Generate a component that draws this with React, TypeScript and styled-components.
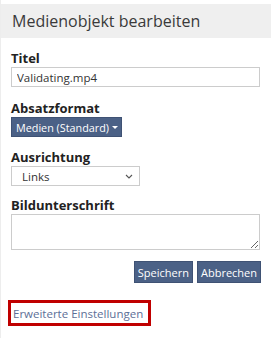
import React from "react";
import styled, { createGlobalStyle } from "styled-components";

const GlobalStyle = createGlobalStyle`
  html, body {
    margin: 0;
    padding: 0;
    background: #ffffff;
  }
  body {
    font-family: "Open Sans", "Liberation Sans", sans-serif;
    color: #333333;
  }
`;

const Panel = styled.div`
  width: 271px;
  height: 338px;
  box-sizing: border-box;
  padding-top: 4px;
  border-left: 1px solid #ededed;
`;

const Header = styled.h1`
  margin: 0;
  height: 34px;
  line-height: 34px;
  padding-left: 11px;
  background: #efefef;
  font-size: 16px;
  font-weight: 400;
  color: #3a3a3a;
`;

const Body = styled.div`
  padding: 11px 10px 0 10px;
  display: flex;
  flex-direction: column;
`;

const Field = styled.div<{ $gap?: number }>`
  display: flex;
  flex-direction: column;
  align-items: flex-start;
  margin-bottom: ${({ $gap }) => $gap ?? 12}px;
`;

const Label = styled.label`
  font-size: 13px;
  line-height: 18px;
  font-weight: 700;
  color: #222222;
`;

const TextInput = styled.input`
  box-sizing: border-box;
  width: 249px;
  height: 20px;
  margin: 0;
  padding: 0 5px;
  border: 1px solid #cccccc;
  font-family: inherit;
  font-size: 11.5px;
  color: #333333;
  outline: none;
`;

const DropButton = styled.button`
  display: flex;
  align-items: center;
  gap: 3px;
  height: 20px;
  margin: 0;
  padding: 0 3px 0 4px;
  border: 1px solid #3f5274;
  background: #4b6186;
  color: #ffffff;
  font-family: inherit;
  font-size: 10.8px;
  cursor: pointer;
`;

const Caret = styled.span`
  width: 0;
  height: 0;
  border-left: 3px solid transparent;
  border-right: 3px solid transparent;
  border-top: 3px solid #ffffff;
  margin-top: 1px;
`;

const SelectBox = styled.div`
  box-sizing: border-box;
  width: 129px;
  height: 20px;
  display: flex;
  align-items: center;
  justify-content: space-between;
  padding: 0 6px 0 10px;
  border: 1px solid #cccccc;
  background: #ffffff;
  font-size: 11.5px;
  color: #333333;
`;

const TextArea = styled.textarea`
  box-sizing: border-box;
  width: 249px;
  height: 36px;
  margin: 0;
  padding: 3px 5px;
  border: 1px solid #cccccc;
  font-family: inherit;
  font-size: 11.5px;
  outline: none;
`;

const Actions = styled.div`
  display: flex;
  justify-content: flex-end;
  gap: 4px;
  margin-bottom: 17px;
`;

const ActionButton = styled.button`
  height: 22px;
  margin: 0;
  padding: 0 3px;
  border: 1px solid #3f5274;
  background: #4b6186;
  color: #ffffff;
  font-family: inherit;
  font-size: 11px;
  cursor: pointer;
`;

const LinkBox = styled.div`
  align-self: flex-start;
  margin-left: -3px;
  box-sizing: border-box;
  height: 26px;
  display: flex;
  align-items: center;
  padding: 0 5px 0 2px;
  border: 3px solid #c00000;
`;

const MoreLink = styled.a`
  font-size: 11.5px;
  color: #5d6f97;
  text-decoration: none;
`;

const App: React.FC = () => {
  return (
    <>
      <GlobalStyle />
      <Panel>
        <Header>Medienobjekt bearbeiten</Header>
        <Body>
          <Field>
            <Label>Titel</Label>
            <TextInput defaultValue="Validating.mp4" />
          </Field>
          <Field $gap={11}>
            <Label>Absatzformat</Label>
            <DropButton>
              Medien (Standard)
              <Caret />
            </DropButton>
          </Field>
          <Field $gap={10}>
            <Label>Ausrichtung</Label>
            <SelectBox>
              Links
              <svg width="8" height="5" viewBox="0 0 8 5">
                <path d="M1 1 L4 4 L7 1" fill="none" stroke="#555" strokeWidth="1.1" />
              </svg>
            </SelectBox>
          </Field>
          <Field $gap={11}>
            <Label>Bildunterschrift</Label>
            <TextArea />
          </Field>
          <Actions>
            <ActionButton>Speichern</ActionButton>
            <ActionButton>Abbrechen</ActionButton>
          </Actions>
          <LinkBox>
            <MoreLink href="#">Erweiterte Einstellungen</MoreLink>
          </LinkBox>
        </Body>
      </Panel>
    </>
  );
};

export default App;
